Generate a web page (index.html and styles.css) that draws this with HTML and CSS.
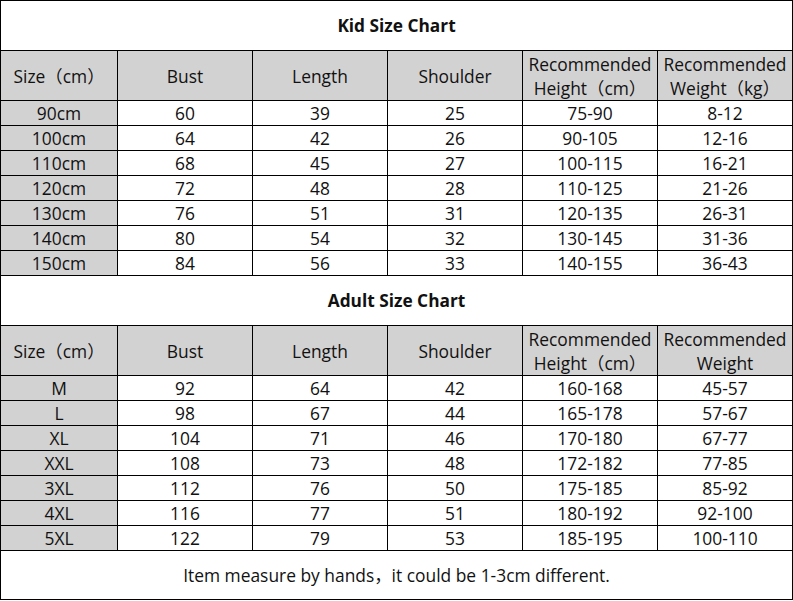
FILE: index.html
```html
<!DOCTYPE html>
<html>
<head>
<meta charset="utf-8">
<link rel="stylesheet" href="styles.css">
</head>
<body>
<table class="chart">
  <colgroup>
    <col class="c-size"><col class="c"><col class="c"><col class="c"><col class="c"><col class="c">
  </colgroup>
  <tr class="title"><td colspan="6">Kid Size Chart</td></tr>
  <tr class="head">
    <td>Size（cm）</td><td>Bust</td><td>Length</td><td>Shoulder</td><td>Recommended<br>Height（cm）</td><td>Recommended<br>Weight（kg）</td>
  </tr>
  <tr><td class="sz">90cm</td><td>60</td><td>39</td><td>25</td><td>75-90</td><td>8-12</td></tr>
  <tr><td class="sz">100cm</td><td>64</td><td>42</td><td>26</td><td>90-105</td><td>12-16</td></tr>
  <tr><td class="sz">110cm</td><td>68</td><td>45</td><td>27</td><td>100-115</td><td>16-21</td></tr>
  <tr><td class="sz">120cm</td><td>72</td><td>48</td><td>28</td><td>110-125</td><td>21-26</td></tr>
  <tr><td class="sz">130cm</td><td>76</td><td>51</td><td>31</td><td>120-135</td><td>26-31</td></tr>
  <tr><td class="sz">140cm</td><td>80</td><td>54</td><td>32</td><td>130-145</td><td>31-36</td></tr>
  <tr><td class="sz">150cm</td><td>84</td><td>56</td><td>33</td><td>140-155</td><td>36-43</td></tr>
  <tr class="title"><td colspan="6">Adult Size Chart</td></tr>
  <tr class="head">
    <td>Size（cm）</td><td>Bust</td><td>Length</td><td>Shoulder</td><td>Recommended<br>Height（cm）</td><td>Recommended<br>Weight</td>
  </tr>
  <tr><td class="sz">M</td><td>92</td><td>64</td><td>42</td><td>160-168</td><td>45-57</td></tr>
  <tr><td class="sz">L</td><td>98</td><td>67</td><td>44</td><td>165-178</td><td>57-67</td></tr>
  <tr><td class="sz">XL</td><td>104</td><td>71</td><td>46</td><td>170-180</td><td>67-77</td></tr>
  <tr><td class="sz">XXL</td><td>108</td><td>73</td><td>48</td><td>172-182</td><td>77-85</td></tr>
  <tr><td class="sz">3XL</td><td>112</td><td>76</td><td>50</td><td>175-185</td><td>85-92</td></tr>
  <tr><td class="sz">4XL</td><td>116</td><td>77</td><td>51</td><td>180-192</td><td>92-100</td></tr>
  <tr><td class="sz">5XL</td><td>122</td><td>79</td><td>53</td><td>185-195</td><td>100-110</td></tr>
  <tr class="foot"><td colspan="6">Item measure by hands，it could be 1-3cm different.</td></tr>
</table>
</body>
</html>
```
FILE: styles.css
```css
html, body {
  margin: 0;
  padding: 0;
  background: #ffffff;
}
body {
  font-family: "Open Sans", "Noto Sans", "Noto Sans CJK SC", sans-serif;
  color: #111111;
}
.chart {
  border-collapse: collapse;
  table-layout: fixed;
  width: 792px;
  margin: 0;
}
.c-size { width: 117px; }
.c { width: 135px; }
.chart td {
  border: 1.5px solid #000;
  text-align: center;
  vertical-align: middle;
  padding: 0;
  font-size: 17.4px;
  height: 24px;
  line-height: 24px;
  white-space: nowrap;
  overflow: hidden;
}
.chart .title td {
  height: 49px;
  font-weight: bold;
  font-size: 17.3px;
}
.chart .head td {
  height: 49px;
  background: #d3d2d2;
  line-height: 24px;
}
.chart td.sz {
  background: #d3d2d2;
}
.chart .foot td {
  height: 48px;
}
```
